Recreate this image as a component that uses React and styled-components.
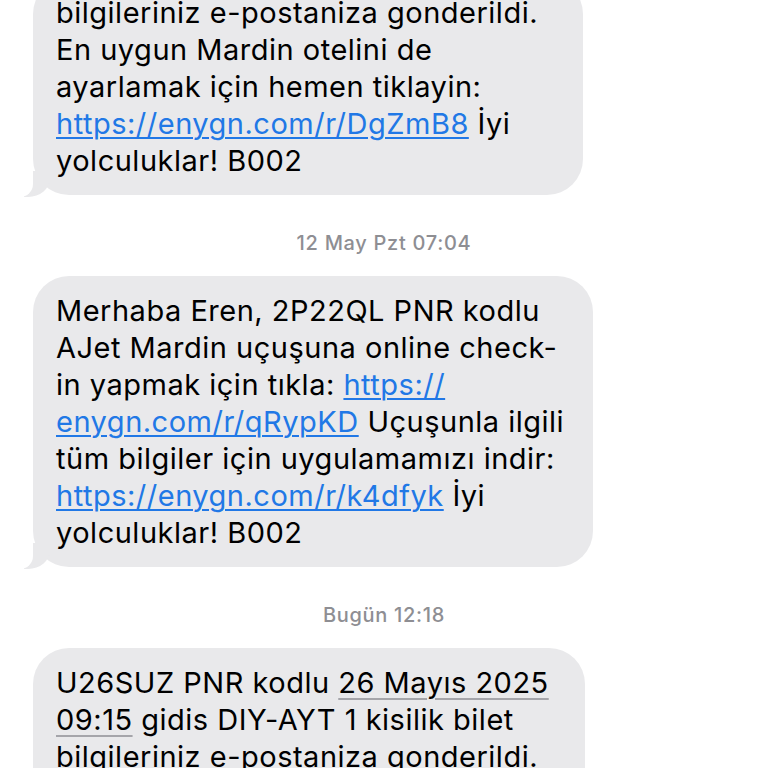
import React from "react";
import styled, { createGlobalStyle } from "styled-components";

const GlobalStyle = createGlobalStyle`
  html, body {
    margin: 0;
    padding: 0;
    background: #ffffff;
  }
  body {
    font-family: Inter, "Noto Sans", "Liberation Sans", sans-serif;
    -webkit-font-smoothing: antialiased;
  }
`;

const Screen = styled.div`
  width: 768px;
  height: 768px;
  overflow: hidden;
  background: #ffffff;
`;

const Thread = styled.div`
  display: flex;
  flex-direction: column;
  align-items: flex-start;
  padding-left: 33px;
  margin-top: -22px;
`;

const Bubble = styled.div`
  position: relative;
  box-sizing: border-box;
  width: ${(p) => p.$width}px;
  padding: 16px 16px 16px 23px;
  background: #e9e9eb;
  border-radius: 36px;
  color: #000000;
  font-size: 29px;
  line-height: 37px;
  letter-spacing: 0.5px;

  &::before,
  &::after {
    content: "";
    position: absolute;
    bottom: -2px;
    height: 26px;
  }

  &::before {
    left: -9px;
    border-left: 26px solid #e9e9eb;
    border-bottom-right-radius: 22px 19px;
  }

  &::after {
    left: -22px;
    width: 22px;
    background: #ffffff;
    border-bottom-right-radius: 13px;
  }
`;

const Line = styled.span`
  position: relative;
  z-index: 1;
  display: block;
  white-space: nowrap;
`;

const Link = styled.span`
  color: #2178e6;
  text-decoration: underline;
  text-decoration-thickness: 2px;
  text-underline-offset: 3px;
`;

const DateMark = styled.span`
  text-decoration: underline;
  text-decoration-color: #a5a5aa;
  text-decoration-thickness: 2px;
  text-underline-offset: 5px;
`;

const Stamp = styled.div`
  align-self: center;
  margin: 37px 0 22px -33px;
  color: #8e8e93;
  font-size: 20px;
  line-height: 22px;
  font-weight: 500;
  letter-spacing: 0.7px;
`;

export default function App() {
  return (
    <Screen>
      <GlobalStyle />
      <Thread>
        <Bubble $width={550}>
          <Line>bilgileriniz e-postaniza gonderildi.</Line>
          <Line>En uygun Mardin otelini de</Line>
          <Line>ayarlamak için hemen tiklayin:</Line>
          <Line>
            <Link>https://enygn.com/r/DgZmB8</Link> İyi
          </Line>
          <Line>yolculuklar! B002</Line>
        </Bubble>

        <Stamp>12 May Pzt 07:04</Stamp>

        <Bubble $width={560}>
          <Line>Merhaba Eren, 2P22QL PNR kodlu</Line>
          <Line>AJet Mardin uçuşuna online check-</Line>
          <Line>
            in yapmak için tıkla: <Link>https://</Link>
          </Line>
          <Line>
            <Link>enygn.com/r/qRypKD</Link> Uçuşunla ilgili
          </Line>
          <Line>tüm bilgiler için uygulamamızı indir:</Line>
          <Line>
            <Link>https://enygn.com/r/k4dfyk</Link> İyi
          </Line>
          <Line>yolculuklar! B002</Line>
        </Bubble>

        <Stamp>Bugün 12:18</Stamp>

        <Bubble $width={552}>
          <Line>
            U26SUZ PNR kodlu <DateMark>26 Mayıs 2025</DateMark>
          </Line>
          <Line>
            <DateMark>09:15</DateMark> gidis DIY-AYT 1 kisilik bilet
          </Line>
          <Line>bilgileriniz e-postaniza gonderildi.</Line>
          <Line>En uygun Mardin otelini de</Line>
        </Bubble>
      </Thread>
    </Screen>
  );
}
